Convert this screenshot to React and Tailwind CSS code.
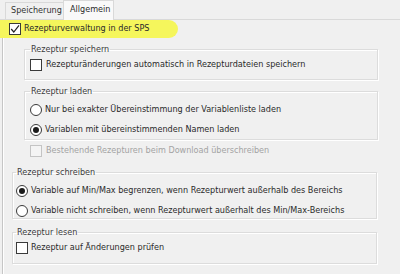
import React from 'react';

const Check = ({ checked = false, disabled = false }) => (
  <span
    className={`w-[12px] h-[12px] shrink-0 border flex items-center justify-center ${
      disabled ? 'border-[#c4c4c4] bg-[#f4f4f4]' : 'border-[#3a3a3a] bg-white'
    }`}
  >
    {checked && (
      <svg width="10" height="10" viewBox="0 0 10 10">
        <path d="M1.2 5 L3.8 8 L9 1.4" fill="none" stroke="#222" strokeWidth="1.2" />
      </svg>
    )}
  </span>
);

const Radio = ({ checked = false }) => (
  <span className="w-[12px] h-[12px] shrink-0 rounded-full border border-[#3a3a3a] bg-white flex items-center justify-center">
    {checked && <span className="w-[6px] h-[6px] rounded-full bg-[#1a1a1a]" />}
  </span>
);

const Row = ({ children, className = '' }) => (
  <div className={`flex items-center gap-[3px] h-[12px] ${className}`}>{children}</div>
);

const Group = ({ title, className = '', children }) => (
  <fieldset className={`border border-[#dcdcdc] shadow-[inset_1px_1px_0_#ffffff,1px_1px_0_#ffffff] ${className}`}>
    <legend className="px-[1px] leading-[12px] text-[#3c3c3c]">{title}</legend>
    {children}
  </fieldset>
);

export default function App() {
  return (
    <div
      className="w-[400px] h-[274px] bg-[#f0f0f0] overflow-hidden text-[9px] text-[#2a2a2a]"
      style={{ fontFamily: '"DejaVu Sans Condensed", "Liberation Sans", sans-serif' }}
    >
      {/* tab strip */}
      <div className="h-[20px] flex items-end pl-[5px] border-b border-[#d9d9d9]">
        <div className="h-[17px] w-[58px] border-t border-l border-[#d9d9d9] flex items-center pl-[5px] text-[#333]">
          Speicherung
        </div>
        <div className="h-[20px] w-[51px] -mb-px bg-[#f9f9f9] border-t border-l border-r border-[#d9d9d9] flex items-center pl-[6px] pb-[2px]">
          Allgemein
        </div>
      </div>

      {/* tab page */}
      <div className="ml-[2px] h-[260px] border-l border-[#c6c6c6] shadow-[inset_1px_0_0_#ffffff]">
        <div className="-ml-[3px] h-[18px] w-[178px] bg-[#f5f65c] rounded-r-[9px] flex items-center gap-[3px] pl-[9px]">
          <Check checked />
          <span>Rezepturverwaltung in der SPS</span>
        </div>

        <Group title="Rezeptur speichern" className="ml-[21px] mt-[5px] w-[354px] pl-[5px] pb-[8px]">
          <Row className="mt-[4px] gap-[4px]">
            <Check />
            <span>Rezepturänderungen automatisch in Rezepturdateien speichern</span>
          </Row>
        </Group>

        <Group title="Rezeptur laden" className="ml-[21px] mt-[5px] w-[354px] pl-[5px] pb-[3px]">
          <Row className="mt-[7px]">
            <Radio />
            <span>Nur bei exakter Übereinstimmung der Variablenliste laden</span>
          </Row>
          <Row className="mt-[8px]">
            <Radio checked />
            <span>Variablen mit übereinstimmenden Namen laden</span>
          </Row>
        </Group>

        <Row className="ml-[27px] mt-[5px] gap-[4px] text-[#a3a3a3]">
          <Check disabled />
          <span>Bestehende Rezepturen beim Download überschreiben</span>
        </Row>

        <Group title="Rezeptur schreiben" className="ml-[9px] mt-[9px] w-[365px] pl-[3px] pb-[1px]">
          <Row className="mt-[7px]">
            <Radio checked />
            <span>Variable auf Min/Max begrenzen, wenn Rezepturwert außerhalb des Bereichs</span>
          </Row>
          <Row className="mt-[8px]">
            <Radio />
            <span>Variable nicht schreiben, wenn Rezepturwert außerhalt des Min/Max-Bereichs</span>
          </Row>
        </Group>

        <Group title="Rezeptur lesen" className="ml-[9px] mt-[7px] w-[365px] pl-[3px] pb-[9px]">
          <Row className="mt-[4px]">
            <Check />
            <span>Rezeptur auf Änderungen prüfen</span>
          </Row>
        </Group>
      </div>
    </div>
  );
}
